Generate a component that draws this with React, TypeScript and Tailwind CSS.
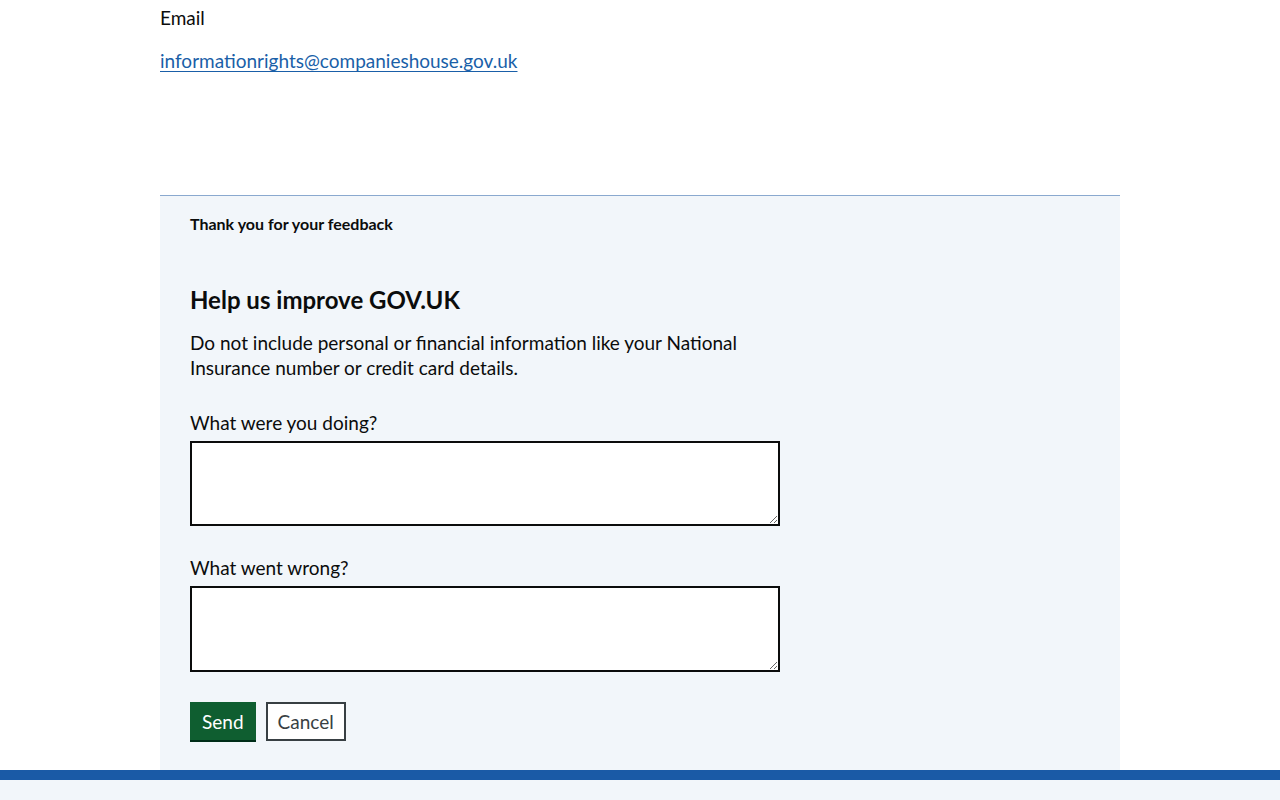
export default function App() {
  return (
    <div className="min-h-screen bg-white text-[#0b0c0c] font-['Lato','Noto_Sans',sans-serif]">
      <main className="mx-auto w-[960px]">
        <p className="pt-[5px] text-[19px] leading-[25px]">Email</p>
        <p className="mt-[18px] text-[19px] leading-[25px]">
          <a
            href="#"
            className="text-[#1a5fa8] underline underline-offset-[3px] decoration-1"
          >
            informationrights@companieshouse.gov.uk
          </a>
        </p>

        <section className="mt-[122px] border-t border-[#8aa9cf] bg-[#f2f6fa] px-[30px] pt-[18px] pb-[29px]">
          <p className="text-[16px] font-bold leading-[20px]">Thank you for your feedback</p>

          <h2 className="mt-[51px] text-[24px] font-bold leading-[30px]">Help us improve GOV.UK</h2>
          <p className="mt-[15px] w-[590px] text-[19px] leading-[25px]">
            Do not include personal or financial information like your National Insurance number or
            credit card details.
          </p>

          <form className="mt-[30px] w-[590px]">
            <label className="block text-[19px] leading-[25px]">What were you doing?</label>
            <textarea className="mt-[6px] block h-[85px] w-full border-2 border-[#0b0c0c] bg-white" />

            <label className="mt-[29px] block text-[19px] leading-[25px]">What went wrong?</label>
            <textarea className="mt-[6px] block h-[86px] w-full border-2 border-[#0b0c0c] bg-white" />

            <div className="mt-[30px] flex gap-[10px]">
              <button
                type="button"
                className="h-[38px] bg-[#0f5e30] px-[12px] text-[19px] leading-[25px] text-white shadow-[0_2px_0_#002d18]"
              >
                Send
              </button>
              <button
                type="button"
                className="h-[39px] border-2 border-[#383f43] bg-white px-[10px] text-[19px] leading-[25px] text-[#383f43]"
              >
                Cancel
              </button>
            </div>
          </form>
        </section>
      </main>
      <footer className="border-t-[10px] border-[#1a5aa6] bg-[#f2f6fa] h-[40px]" />
    </div>
  );
}
